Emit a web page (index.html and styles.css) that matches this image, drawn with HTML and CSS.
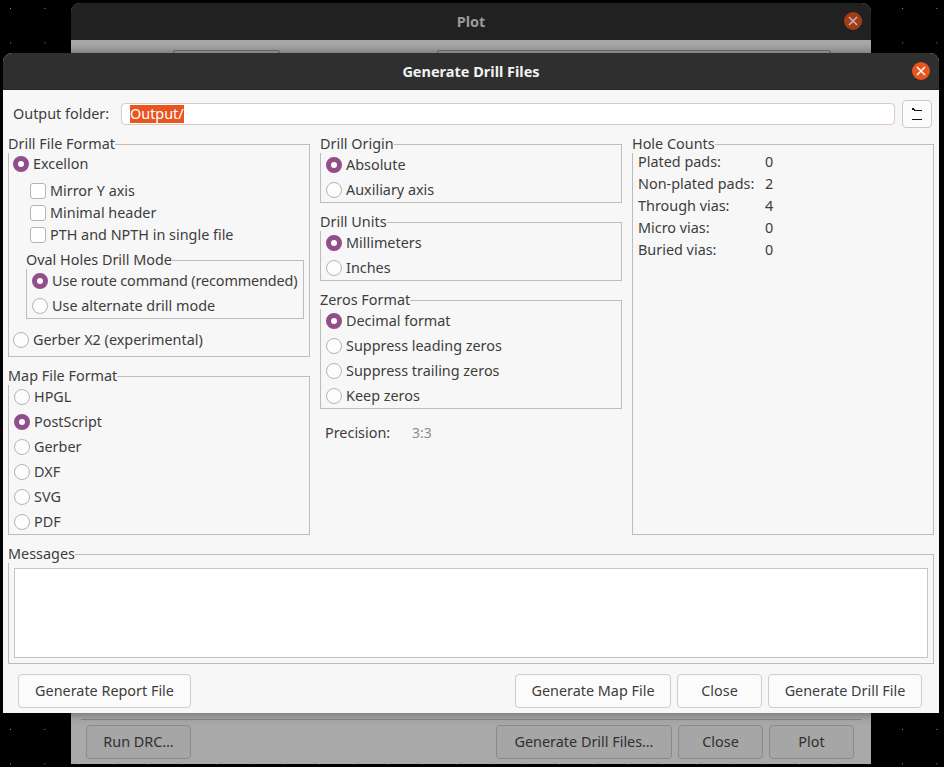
FILE: index.html
```html
<!DOCTYPE html>
<html lang="en">
<head>
<meta charset="utf-8">
<title>Generate Drill Files</title>
<link rel="stylesheet" href="styles.css">
</head>
<body>
<svg class="stars" width="944" height="767" aria-hidden="true">
  <defs>
    <pattern id="star" x="10" y="8" width="34.31" height="34.33" patternUnits="userSpaceOnUse">
      <rect width="1" height="1" fill="#8a8a8a"></rect>
    </pattern>
  </defs>
  <rect width="944" height="767" fill="url(#star)"></rect>
</svg>

<section class="window back">
  <header class="titlebar back-bar">
    <span class="title">Plot</span>
    <span class="close close-dim"><svg width="10" height="10" viewBox="0 0 10 10"><path d="M1 1l8 8M9 1l-8 8"></path></svg></span>
  </header>
  <div class="back-body">
    <div class="back-top">
      <div class="back-chip left"></div>
      <div class="back-chip right"></div>
    </div>
    <div class="back-panel"></div>
    <div class="back-buttons">
      <button class="btn dim drc">Run DRC…</button>
      <span class="spacer"></span>
      <button class="btn dim gdf">Generate Drill Files…</button>
      <button class="btn dim w85">Close</button>
      <button class="btn dim w85">Plot</button>
    </div>
  </div>
</section>

<section class="window front">
  <header class="titlebar front-bar">
    <span class="title">Generate Drill Files</span>
    <span class="close"><svg width="10" height="10" viewBox="0 0 10 10"><path d="M1 1l8 8M9 1l-8 8"></path></svg></span>
  </header>
  <div class="body">
    <div class="folder-row">
      <label class="folder-label">Output folder:</label>
      <div class="folder-input"><span class="selected">Output/</span></div>
      <button class="folder-btn" aria-label="Browse">
        <svg width="16" height="16" viewBox="0 0 16 16"><path d="M3 2.5h2M3 3.5h3M5 4.5h8M3 13.5h10"></path></svg>
      </button>
    </div>

    <div class="columns">
      <div class="col">
        <fieldset class="group drill-format">
          <legend>Drill File Format</legend>
          <div class="radio tight short on"><i></i>Excellon</div>
          <div class="checks">
            <div class="check"><i></i>Mirror Y axis</div>
            <div class="check"><i></i>Minimal header</div>
            <div class="check"><i></i>PTH and NPTH in single file</div>
          </div>
          <fieldset class="group oval">
            <legend>Oval Holes Drill Mode</legend>
            <div class="radio first on"><i></i><span class="snug">Use route command (recommended)</span></div>
            <div class="radio"><i></i>Use alternate drill mode</div>
          </fieldset>
          <div class="radio tight r-gerber"><i></i>Gerber X2 (experimental)</div>
        </fieldset>
        <fieldset class="group map-format">
          <legend>Map File Format</legend>
          <div class="radio first"><i></i>HPGL</div>
          <div class="radio on"><i></i>PostScript</div>
          <div class="radio"><i></i>Gerber</div>
          <div class="radio"><i></i>DXF</div>
          <div class="radio"><i></i>SVG</div>
          <div class="radio"><i></i>PDF</div>
        </fieldset>
      </div>

      <div class="col col-mid">
        <fieldset class="group pair">
          <legend>Drill Origin</legend>
          <div class="radio first on"><i></i>Absolute</div>
          <div class="radio"><i></i>Auxiliary axis</div>
        </fieldset>
        <fieldset class="group pair">
          <legend>Drill Units</legend>
          <div class="radio first on"><i></i>Millimeters</div>
          <div class="radio"><i></i>Inches</div>
        </fieldset>
        <fieldset class="group quad">
          <legend>Zeros Format</legend>
          <div class="radio first on"><i></i>Decimal format</div>
          <div class="radio"><i></i>Suppress leading zeros</div>
          <div class="radio"><i></i>Suppress trailing zeros</div>
          <div class="radio"><i></i>Keep zeros</div>
        </fieldset>
        <div class="precision"><span class="p-label">Precision:</span><span class="p-value">3:3</span></div>
      </div>

      <div class="col">
        <fieldset class="group holes">
          <legend>Hole Counts</legend>
          <div class="counts">
            <div class="count"><span>Plated pads:</span><span>0</span></div>
            <div class="count"><span>Non-plated pads:</span><span>2</span></div>
            <div class="count"><span>Through vias:</span><span>4</span></div>
            <div class="count"><span>Micro vias:</span><span>0</span></div>
            <div class="count"><span>Buried vias:</span><span>0</span></div>
          </div>
        </fieldset>
      </div>
    </div>

    <fieldset class="group messages">
      <legend>Messages</legend>
      <div class="msg-box"></div>
    </fieldset>

    <div class="buttons">
      <button class="btn w173">Generate Report File</button>
      <span class="spacer"></span>
      <button class="btn w156">Generate Map File</button>
      <button class="btn w85">Close</button>
      <button class="btn w154">Generate Drill File</button>
    </div>
  </div>
</section>
</body>
</html>
```
FILE: styles.css
```css
* { box-sizing: border-box; }
html, body { margin: 0; height: 767px; overflow: hidden; }
body { background: #000; position: relative; font: 14.4px/18px "Noto Sans", "Open Sans", sans-serif; color: #3d3d3d; }
.stars { position: absolute; left: 0; top: 0; }

.window { position: absolute; border-radius: 9px 9px 0 0; display: flex; flex-direction: column; }
.back { left: 71px; top: 3px; width: 800px; height: 761px; background: #a9a9a9; }
.front { left: 3px; top: 53px; width: 936px; height: 660px; background: #f7f7f7; box-shadow: 0 0 12px rgba(0, 0, 0, .45); }

.titlebar { flex: none; height: 37px; position: relative; display: flex; align-items: center; justify-content: center; font-weight: 700; font-size: 14.5px; border-radius: 9px 9px 0 0; }
.front-bar { background: #302f2f; color: #f2f2f2; border-bottom: 1px solid #262626; }
.back-bar { background: #222121; color: #9a9a9a; padding-bottom: 2px; }
.close { position: absolute; right: 9px; top: 9px; width: 18px; height: 18px; border-radius: 50%; background: #e95420; display: flex; align-items: center; justify-content: center; }
.close path { stroke: #fff; stroke-width: 1.5; fill: none; }
.close-dim { background: #a23c18; }
.close-dim path { stroke: #c8b8b0; }

.back-body { flex: 1; display: flex; flex-direction: column; padding: 0 17px 5px 15px; }
.back-top { display: flex; flex: none; height: 13px; padding-top: 10px; }
.back-chip { height: 3px; border: 1px solid #777; border-bottom: 0; border-radius: 3px 3px 0 0; }
.back-chip.left { margin-left: 87px; width: 107px; }
.back-chip.right { margin-left: 157px; width: 394px; }
.back-panel { flex: 1; margin: 0 -7px 5px -5px; border-bottom: 1px solid #888; }
.back-buttons { display: flex; flex: none; gap: 6px; height: 34px; }

.body { flex: 1; display: flex; flex-direction: column; padding: 0 5px; }
.folder-row { flex: none; display: flex; align-items: center; height: 45px; padding: 3px 0 0 5px; }
.folder-label { width: 108px; }
.folder-input { width: 774px; height: 22px; background: #fff; border: 1px solid #dcc8c2; border-radius: 4px; padding: 1px 0 0 8px; line-height: 18px; }
.selected { display: block; width: max-content; background: #e95420; color: #fff; height: 18px; line-height: 18px; }
.folder-btn { width: 30px; height: 28px; margin-left: 7px; background: #fbfbfb; border: 1px solid #c9c9c9; border-radius: 4px; padding: 0; display: flex; align-items: center; justify-content: center; }
.folder-btn path { stroke: #111; stroke-width: 1; fill: none; }

.columns { flex: none; display: flex; gap: 10px; height: 400px; }
.col { display: flex; flex-direction: column; width: 302px; }

fieldset.group { margin: 0; padding: 0; border: 1px solid #bcbcbc; min-width: 0; }
fieldset.group > legend { padding: 0; margin-left: -1px; line-height: 18px; }

.radio { height: 25px; display: flex; align-items: center; padding-left: 5px; gap: 4px; white-space: nowrap; }
.radio i { flex: none; width: 16px; height: 16px; border-radius: 50%; background: #fdfdfd; border: 1px solid #b4b4b4; }
.radio.on i { background: #fff; border: 5px solid #924d8b; }
.radio.first { margin-top: -1px; }
.radio.tight { padding-left: 4px; }
.radio.short { height: 22px; }
.radio.r-gerber { margin-top: 8px; }
.snug { letter-spacing: -.13px; }

.check { height: 22px; display: flex; align-items: center; padding-left: 21px; gap: 4px; }
.check i { flex: none; width: 16px; height: 16px; border-radius: 3px; background: #fff; border: 1px solid #b4b4b4; }

fieldset.drill-format { height: 222px; }
.checks { margin-top: 5px; }
fieldset.oval { margin: 5px 5px 0 17px; height: 68px; }
fieldset.map-format { margin-top: 10px; height: 168px; }

fieldset.pair { height: 68px; margin-bottom: 10px; }
fieldset.quad { height: 118px; }
.precision { display: flex; padding: 15px 0 0 5px; }
.p-label { width: 87px; }
.p-value { color: #8d8d8d; font-size: 14px; }

fieldset.holes { height: 400px; }
.counts { margin-top: -2px; }
.count { display: grid; grid-template-columns: 127px 1fr; height: 22px; align-items: center; padding-left: 5px; }

fieldset.messages { flex: none; height: 119px; margin-top: 10px; padding: 5px 5px 0; }
fieldset.messages > legend { margin-left: -6px; }
.msg-box { height: 90px; background: #fff; border: 1px solid #c4c4c4; }

.buttons { flex: none; display: flex; gap: 6px; padding: 10px 12px 0 10px; }
.spacer { flex: 1; }
.btn { height: 34px; font: inherit; color: #3d3d3d; background: #fbfbfb; border: 1px solid #cdcdcd; border-radius: 4px; padding: 0; white-space: nowrap; }
.w173 { width: 173px; }
.w156 { width: 156px; }
.w85 { width: 85px; }
.w154 { width: 154px; }
.dim { background: #a6a6a6; border-color: #8a8a8a; color: #303030; }
.drc { width: 105px; }
.gdf { width: 176px; }
```
